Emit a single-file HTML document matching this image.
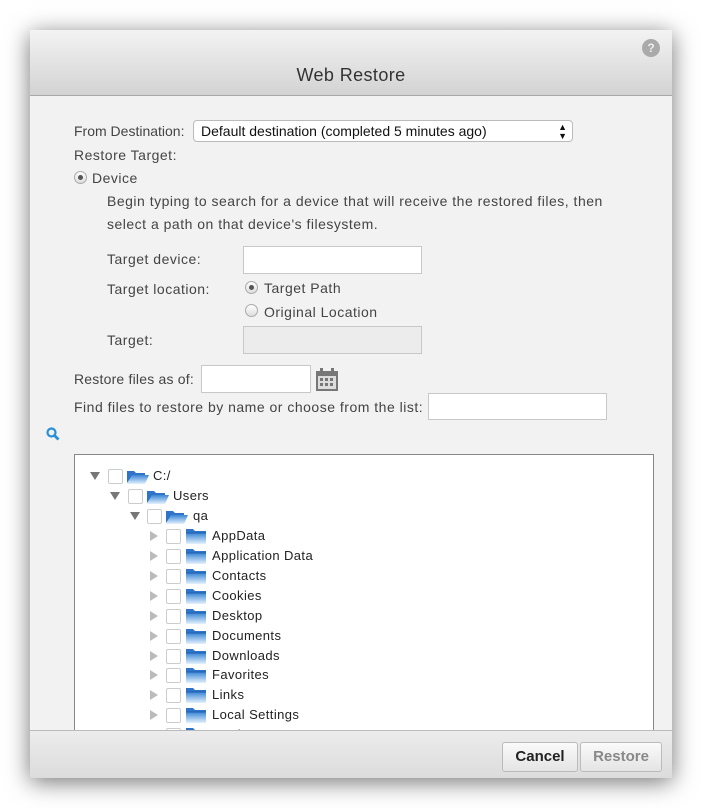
<!DOCTYPE html>
<html><head><style>
*{margin:0;padding:0;box-sizing:border-box}
body{width:702px;height:808px;background:#fff;position:relative;overflow:hidden;font-family:"Liberation Sans",sans-serif;color:#444;font-size:14px}
.dlg{position:absolute;left:30px;top:30px;width:642px;height:748px;background:#f2f2f2;box-shadow:0 4px 22px rgba(0,0,0,.55)}
.hdr{position:absolute;left:0;top:0;width:642px;height:66px;background:linear-gradient(#f3f3f3,#d3d3d3);border-bottom:1px solid #a8a8a8}
.hdr h1{position:absolute;top:35px;width:100%;text-align:center;font-weight:normal;font-size:18px;letter-spacing:.4px;color:#333}
.help{position:absolute;left:612px;top:9px;width:18px;height:18px;border-radius:50%;background:#aaa;color:#eee;font-size:12px;font-weight:bold;text-align:center;line-height:18px}
.a{position:absolute;white-space:nowrap}
.dlg>.a{letter-spacing:.5px;margin-top:1px}
.inp{position:absolute;background:#fff;border:1px solid #c8c8c8}
.radio{position:absolute;width:13px;height:13px;border-radius:50%;border:1px solid #aaa;background:linear-gradient(#fff,#ddd)}
.radio.on::after{content:"";position:absolute;left:3px;top:3px;width:5px;height:5px;border-radius:50%;background:#555}
.tree{position:absolute;left:44px;top:424px;width:580px;height:276px;background:#fff;border:1px solid #888;border-bottom:none;overflow:hidden}
.row{position:absolute;height:20px;font-size:13px;color:#222;letter-spacing:.4px}
.tri{position:absolute;top:6px;width:0;height:0}
.tri.d{border-left:5px solid transparent;border-right:5px solid transparent;border-top:8px solid #777}
.tri.r{border-top:5px solid transparent;border-bottom:5px solid transparent;border-left:8px solid #bbb;top:5px}
.cb{position:absolute;top:3px;width:15px;height:15px;border:1px solid #ccc;border-radius:2px;background:#fff}
.ftr{position:absolute;left:0;top:700px;width:642px;height:48px;background:linear-gradient(#ececec,#dcdcdc);border-top:1px solid #bbb}
.btn{position:absolute;top:11px;height:30px;border:1px solid #bbb;border-radius:3px;background:linear-gradient(#fafafa,#e4e4e4);font-weight:bold;font-size:15px;text-align:center;line-height:28px}
</style></head><body>
<div class="dlg">
<div class="hdr"><div class="help">?</div><h1>Web Restore</h1></div>

<div class="a" style="left:44px;top:92px;letter-spacing:0">From Destination:</div>
<div class="inp" style="left:163px;top:90px;width:380px;height:22px;border-radius:4px;border-color:#bbb;color:#111;padding-left:7px;line-height:20px;font-size:14px">Default destination (completed 5 minutes ago)<span style="position:absolute;right:5px;top:0;font-size:9px;line-height:9px;top:2px">▲<br>▼</span></div>
<div class="a" style="left:44px;top:116px">Restore Target:</div>
<div class="radio on" style="left:44px;top:141px"></div>
<div class="a" style="left:62px;top:139px">Device</div>
<div class="a" style="left:77px;top:162px">Begin typing to search for a device that will receive the restored files, then</div>
<div class="a" style="left:77px;top:185px">select a path on that device's filesystem.</div>
<div class="a" style="left:77px;top:220px">Target device:</div>
<div class="inp" style="left:213px;top:216px;width:179px;height:28px"></div>
<div class="a" style="left:77px;top:250px">Target location:</div>
<div class="radio on" style="left:215px;top:251px"></div>
<div class="a" style="left:234px;top:249px">Target Path</div>
<div class="radio" style="left:215px;top:274px"></div>
<div class="a" style="left:234px;top:273px">Original Location</div>
<div class="a" style="left:77px;top:301px">Target:</div>
<div class="inp" style="left:213px;top:296px;width:179px;height:28px;background:#ececec"></div>
<div class="a" style="left:44px;top:340px;letter-spacing:.2px">Restore files as of:</div>
<div class="inp" style="left:171px;top:335px;width:110px;height:28px"></div>
<svg class="a" style="left:285px;top:336px" width="24" height="25" viewBox="0 0 24 25"><rect x="1" y="4" width="22" height="20" fill="#777"/><rect x="3" y="9" width="18" height="13" fill="#ddd"/><rect x="5" y="1" width="3" height="6" fill="#777"/><rect x="16" y="1" width="3" height="6" fill="#777"/><g fill="#777"><rect x="5" y="11" width="3" height="3"/><rect x="10" y="11" width="3" height="3"/><rect x="15" y="11" width="3" height="3"/><rect x="5" y="16" width="3" height="3"/><rect x="10" y="16" width="3" height="3"/><rect x="15" y="16" width="3" height="3"/></g></svg>
<div class="a" style="left:44px;top:368px">Find files to restore by name or choose from the list:</div>
<div class="inp" style="left:398px;top:363px;width:179px;height:27px"></div>
<svg class="a" style="left:16px;top:396px" width="14" height="14" viewBox="0 0 14 14"><circle cx="5.5" cy="5.5" r="4" fill="none" stroke="#2a8fd6" stroke-width="2.2"/><path d="M8.5 8.5L12.5 12.5" stroke="#2a8fd6" stroke-width="2.8"/></svg>

<div class="tree">
<svg width="0" height="0" style="position:absolute"><defs>
<linearGradient id="g" x1="0" y1="0" x2="0" y2="1"><stop offset="0" stop-color="#3b86d6"/><stop offset="1" stop-color="#e4f1fc"/></linearGradient>
<symbol id="fo" viewBox="0 0 22 14"><path d="M0 1h7l2 2h9v3H5L0 13z" fill="#2f74c8"/><path d="M5 5h17l-4 9H0z" fill="url(#g)"/></symbol>
<symbol id="fc" viewBox="0 0 20 15"><path d="M0 0h7l2 2h11v13H0z" fill="#2f74c8"/><path d="M0 4h20v11H0z" fill="url(#g)"/><path d="M0 4h20" stroke="#1d5fb0" stroke-width="1"/></symbol>
</defs></svg>
<div class="row" style="left:0;top:11px">
<div class="tri d" style="left:15px"></div><div class="cb" style="left:33px"></div>
<svg class="a" style="left:52px;top:4px" width="22" height="14"><use href="#fo"/></svg><div class="a" style="left:78px;top:2px">C:/</div></div>
<div class="row" style="left:0;top:31px">
<div class="tri d" style="left:35px"></div><div class="cb" style="left:53px"></div>
<svg class="a" style="left:72px;top:4px" width="22" height="14"><use href="#fo"/></svg><div class="a" style="left:98px;top:2px">Users</div></div>
<div class="row" style="left:0;top:51px">
<div class="tri d" style="left:55px"></div><div class="cb" style="left:72px"></div>
<svg class="a" style="left:91px;top:4px" width="22" height="14"><use href="#fo"/></svg><div class="a" style="left:118px;top:2px">qa</div></div>
<div class="row" style="left:0;top:71px"><div class="tri r" style="left:75px"></div><div class="cb" style="left:91px"></div><svg class="a" style="left:111px;top:3px" width="20" height="15"><use href="#fc"/></svg><div class="a" style="left:137px;top:2px">AppData</div></div>
<div class="row" style="left:0;top:91px"><div class="tri r" style="left:75px"></div><div class="cb" style="left:91px"></div><svg class="a" style="left:111px;top:3px" width="20" height="15"><use href="#fc"/></svg><div class="a" style="left:137px;top:2px">Application Data</div></div>
<div class="row" style="left:0;top:111px"><div class="tri r" style="left:75px"></div><div class="cb" style="left:91px"></div><svg class="a" style="left:111px;top:3px" width="20" height="15"><use href="#fc"/></svg><div class="a" style="left:137px;top:2px">Contacts</div></div>
<div class="row" style="left:0;top:131px"><div class="tri r" style="left:75px"></div><div class="cb" style="left:91px"></div><svg class="a" style="left:111px;top:3px" width="20" height="15"><use href="#fc"/></svg><div class="a" style="left:137px;top:2px">Cookies</div></div>
<div class="row" style="left:0;top:151px"><div class="tri r" style="left:75px"></div><div class="cb" style="left:91px"></div><svg class="a" style="left:111px;top:3px" width="20" height="15"><use href="#fc"/></svg><div class="a" style="left:137px;top:2px">Desktop</div></div>
<div class="row" style="left:0;top:171px"><div class="tri r" style="left:75px"></div><div class="cb" style="left:91px"></div><svg class="a" style="left:111px;top:3px" width="20" height="15"><use href="#fc"/></svg><div class="a" style="left:137px;top:2px">Documents</div></div>
<div class="row" style="left:0;top:191px"><div class="tri r" style="left:75px"></div><div class="cb" style="left:91px"></div><svg class="a" style="left:111px;top:3px" width="20" height="15"><use href="#fc"/></svg><div class="a" style="left:137px;top:2px">Downloads</div></div>
<div class="row" style="left:0;top:210px"><div class="tri r" style="left:75px"></div><div class="cb" style="left:91px"></div><svg class="a" style="left:111px;top:3px" width="20" height="15"><use href="#fc"/></svg><div class="a" style="left:137px;top:2px">Favorites</div></div>
<div class="row" style="left:0;top:230px"><div class="tri r" style="left:75px"></div><div class="cb" style="left:91px"></div><svg class="a" style="left:111px;top:3px" width="20" height="15"><use href="#fc"/></svg><div class="a" style="left:137px;top:2px">Links</div></div>
<div class="row" style="left:0;top:250px"><div class="tri r" style="left:75px"></div><div class="cb" style="left:91px"></div><svg class="a" style="left:111px;top:3px" width="20" height="15"><use href="#fc"/></svg><div class="a" style="left:137px;top:2px">Local Settings</div></div>
<div class="row" style="left:0;top:270px"><div class="tri r" style="left:75px"></div><div class="cb" style="left:91px"></div><svg class="a" style="left:111px;top:3px" width="20" height="15"><use href="#fc"/></svg><div class="a" style="left:137px;top:2px">Music</div></div>
</div>

<div class="ftr">
<div class="btn" style="left:472px;width:76px;color:#222">Cancel</div>
<div class="btn" style="left:550px;width:82px;color:#888">Restore</div>
</div>
</div>
</body></html>
